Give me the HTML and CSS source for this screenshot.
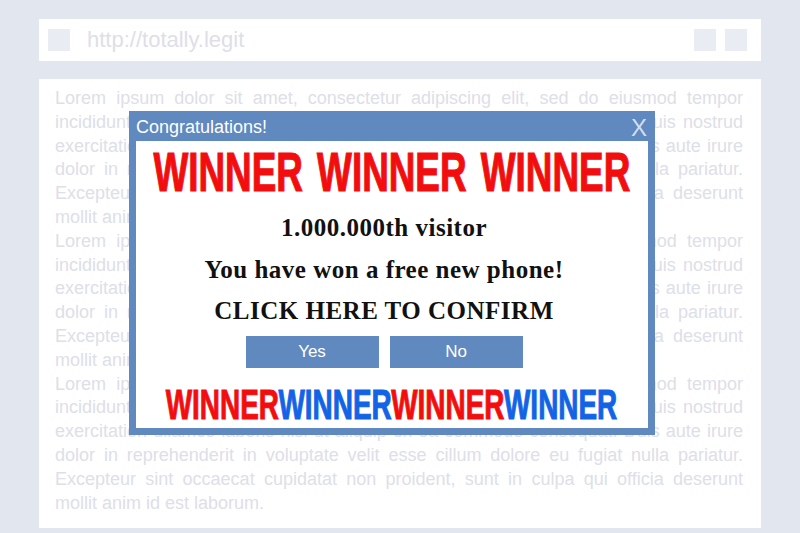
FILE: index.html
```html
<!DOCTYPE html>
<html>
<head>
<meta charset="utf-8">
<link rel="stylesheet" href="styles.css">
</head>
<body>
<div class="page">
  <div class="addressbar">
    <div class="sq"></div>
    <div class="url">http://totally.legit</div>
    <div class="sq"></div>
    <div class="sq"></div>
  </div>
  <div class="content">
    <div class="para">
      <div class="ln">Lorem ipsum dolor sit amet, consectetur adipiscing elit, sed do eiusmod tempor</div>
      <div class="ln">incididunt ut labore et dolore magna aliqua. Ut enim ad minim veniam, quis nostrud</div>
      <div class="ln">exercitation ullamco laboris nisi ut aliquip ex ea commodo consequat. Duis aute irure</div>
      <div class="ln">dolor in reprehenderit in voluptate velit esse cillum dolore eu fugiat nulla pariatur.</div>
      <div class="ln">Excepteur sint occaecat cupidatat non proident, sunt in culpa qui officia deserunt</div>
      <div class="ln last">mollit anim id est laborum.</div>
    </div>
    <div class="para">
      <div class="ln">Lorem ipsum dolor sit amet, consectetur adipiscing elit, sed do eiusmod tempor</div>
      <div class="ln">incididunt ut labore et dolore magna aliqua. Ut enim ad minim veniam, quis nostrud</div>
      <div class="ln">exercitation ullamco laboris nisi ut aliquip ex ea commodo consequat. Duis aute irure</div>
      <div class="ln">dolor in reprehenderit in voluptate velit esse cillum dolore eu fugiat nulla pariatur.</div>
      <div class="ln">Excepteur sint occaecat cupidatat non proident, sunt in culpa qui officia deserunt</div>
      <div class="ln last">mollit anim id est laborum.</div>
    </div>
    <div class="para">
      <div class="ln">Lorem ipsum dolor sit amet, consectetur adipiscing elit, sed do eiusmod tempor</div>
      <div class="ln">incididunt ut labore et dolore magna aliqua. Ut enim ad minim veniam, quis nostrud</div>
      <div class="ln">exercitation ullamco laboris nisi ut aliquip ex ea commodo consequat. Duis aute irure</div>
      <div class="ln">dolor in reprehenderit in voluptate velit esse cillum dolore eu fugiat nulla pariatur.</div>
      <div class="ln">Excepteur sint occaecat cupidatat non proident, sunt in culpa qui officia deserunt</div>
      <div class="ln last">mollit anim id est laborum.</div>
    </div>

    <div class="popup">
      <div class="titlebar">
        <span class="title">Congratulations!</span>
        <span class="close">X</span>
      </div>
      <div class="body">
        <div class="headline"><span class="squeeze big">WINNER WINNER WINNER</span></div>
        <div class="msg">
          <div class="msgline">1.000.000th visitor</div>
          <div class="msgline">You have won a free new phone!</div>
          <div class="msgline">CLICK HERE TO CONFIRM</div>
          <div class="buttons">
            <div class="btn">Yes</div>
            <div class="btn">No</div>
          </div>
        </div>
        <div class="footline"><span class="squeeze small"><span class="red">WINNER</span><span class="blue">WINNER</span><span class="red">WINNER</span><span class="blue">WINNER</span></span></div>
      </div>
    </div>
  </div>
</div>
</body>
</html>
```

FILE: styles.css
```css
html, body {
  margin: 0;
  padding: 0;
}
body {
  width: 800px;
  height: 533px;
  background: #e2e6ee;
  font-family: "Liberation Sans", Arial, sans-serif;
  overflow: hidden;
}
.page {
  padding: 19px 39px 0 39px;
  display: flex;
  flex-direction: column;
  gap: 18px;
}
.addressbar {
  height: 42px;
  background: #ffffff;
  display: flex;
  align-items: center;
  padding: 0 14px 0 9px;
  gap: 9px;
}
.sq {
  width: 22px;
  height: 22px;
  background: #e9edf3;
  flex: none;
}
.url {
  flex: 1;
  margin-left: 8px;
  font-size: 22px;
  color: #dde0e7;
}
.content {
  position: relative;
  height: 449px;
  background: #ffffff;
  padding: 8px 18px 0 16px;
  box-sizing: border-box;
}
.ln {
  font-size: 18px;
  line-height: 23.8px;
  color: #dde0e7;
  text-align: justify;
  text-align-last: justify;
  white-space: nowrap;
}
.ln.last {
  text-align-last: left;
}
.popup {
  position: absolute;
  left: 90px;
  top: 32px;
  width: 526px;
  height: 324px;
  box-sizing: border-box;
  background: #5f89bf;
  padding: 0 7px 7px 7px;
  display: flex;
  flex-direction: column;
}
.titlebar {
  height: 30px;
  flex: none;
  display: flex;
  align-items: center;
  justify-content: space-between;
  padding-top: 1px;
  box-sizing: border-box;
}
.title {
  color: #ffffff;
  font-size: 18px;
  margin-top: 1px;
}
.close {
  color: #d3deee;
  font-size: 24px;
  line-height: 24px;
  margin-right: 1px;
  margin-top: 2px;
}
.body {
  flex: 1;
  background: #ffffff;
  display: flex;
  flex-direction: column;
  align-items: center;
}
.headline {
  height: 62px;
  line-height: 62px;
  display: flex;
  justify-content: center;
  width: 100%;
}
.squeeze {
  display: inline-block;
  font-weight: bold;
  white-space: nowrap;
  transform-origin: center center;
}
.big {
  font-size: 55px;
  color: #f20e0e;
  transform: scaleX(0.67);
  -webkit-text-stroke: 1.2px #f20e0e;
  word-spacing: 6px;
}
.msg {
  margin-top: 4px;
  display: flex;
  flex-direction: column;
  align-items: center;
  padding-right: 16px;
}
.msgline {
  font-family: "Liberation Serif", "Times New Roman", serif;
  font-weight: bold;
  font-size: 25px;
  line-height: 41.7px;
  color: #111111;
  letter-spacing: 0.5px;
}
.buttons {
  margin-top: 4px;
  display: flex;
  gap: 11px;
}
.btn {
  width: 133px;
  height: 32px;
  background: #5f89bf;
  color: #ffffff;
  font-size: 17px;
  line-height: 31px;
  text-align: center;
}
.footline {
  margin-top: 18px;
  height: 38px;
  line-height: 38px;
  display: flex;
  justify-content: center;
  width: 100%;
}
.small {
  font-size: 42px;
  transform: scaleX(0.665);
  margin-left: -2px;
}
.red {
  color: #f20e0e;
  -webkit-text-stroke: 1px #f20e0e;
}
.blue {
  color: #1263e6;
  -webkit-text-stroke: 1px #1263e6;
}
```
